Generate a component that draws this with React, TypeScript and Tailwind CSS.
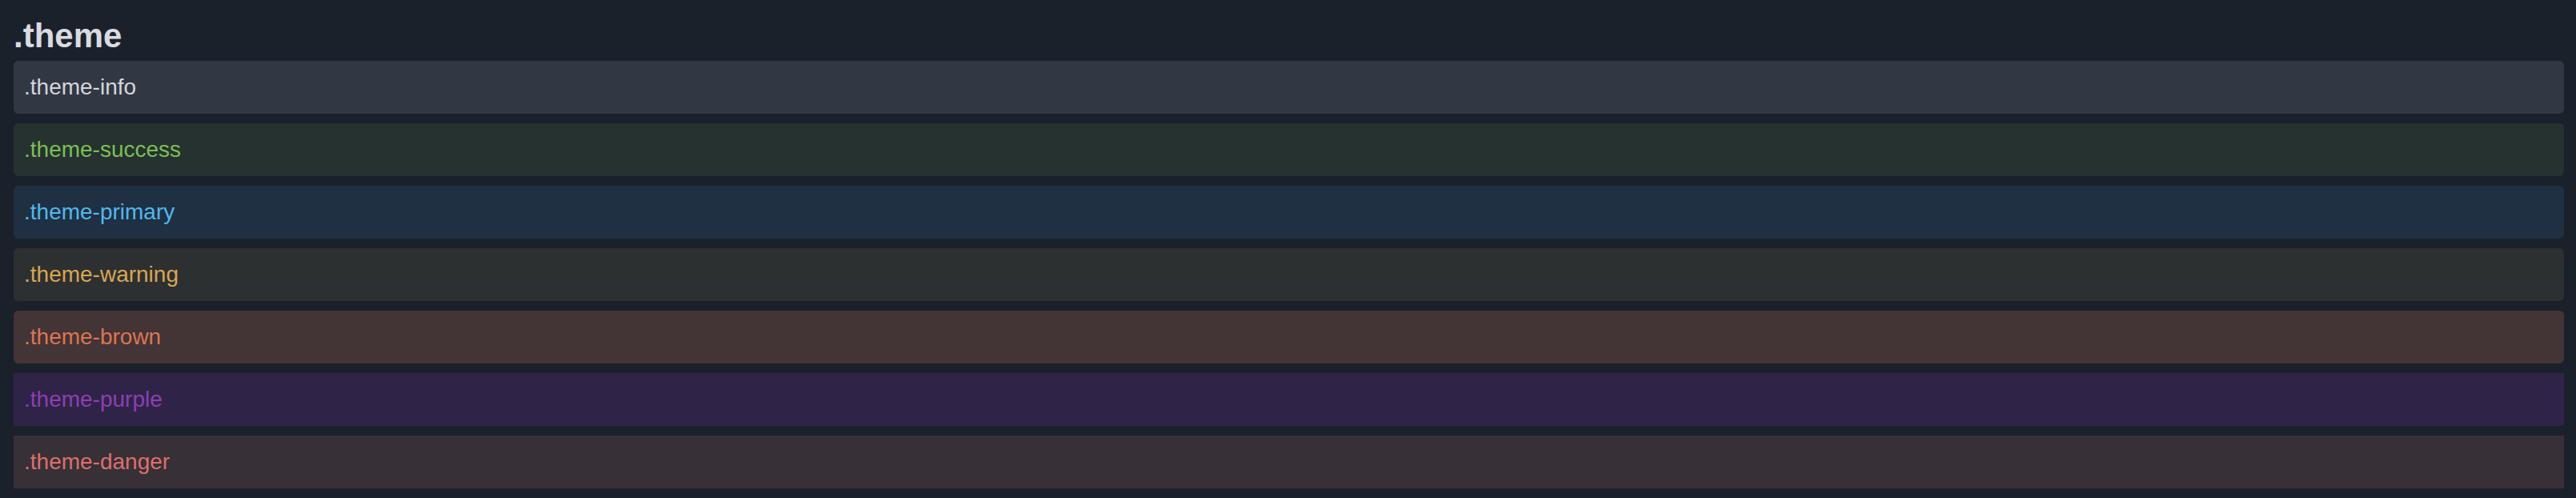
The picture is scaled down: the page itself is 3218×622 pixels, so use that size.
const themes = [
  { name: ".theme-info", row: "bg-[#323843] text-[#d3d6dc] rounded-[6px]" },
  { name: ".theme-success", row: "bg-[#25322f] text-[#7cbf57] rounded-[6px]" },
  { name: ".theme-primary", row: "bg-[#1f3043] text-[#52b8ec] rounded-[6px]" },
  { name: ".theme-warning", row: "bg-[#2d3031] text-[#d9a652] rounded-[6px]" },
  { name: ".theme-brown", row: "bg-[#433435] text-[#dc7553] rounded-[6px]" },
  { name: ".theme-purple", row: "bg-[#2f2447] text-[#8c3fb3]" },
  { name: ".theme-danger", row: "bg-[#373037] text-[#de6f6b]" },
]

const App = () => {
  return (
    <div className="min-h-screen w-full bg-[#1b212b] pl-[17px] pr-[15px] pt-[21px] font-['Liberation_Sans',Arial,sans-serif]">
      <h1 className="text-[42px] leading-[48px] font-bold text-[#d8dbe0] mb-[7px]">.theme</h1>

      {/* theme rows */}
      <div className="flex flex-col gap-[12px]">
        {themes.map((t) => (
          <div key={t.name} className={`${t.row} h-[66px] flex items-center pl-[13px] text-[28px]`}>
            {t.name}
          </div>
        ))}
      </div>
    </div>
  )
}

export default App
